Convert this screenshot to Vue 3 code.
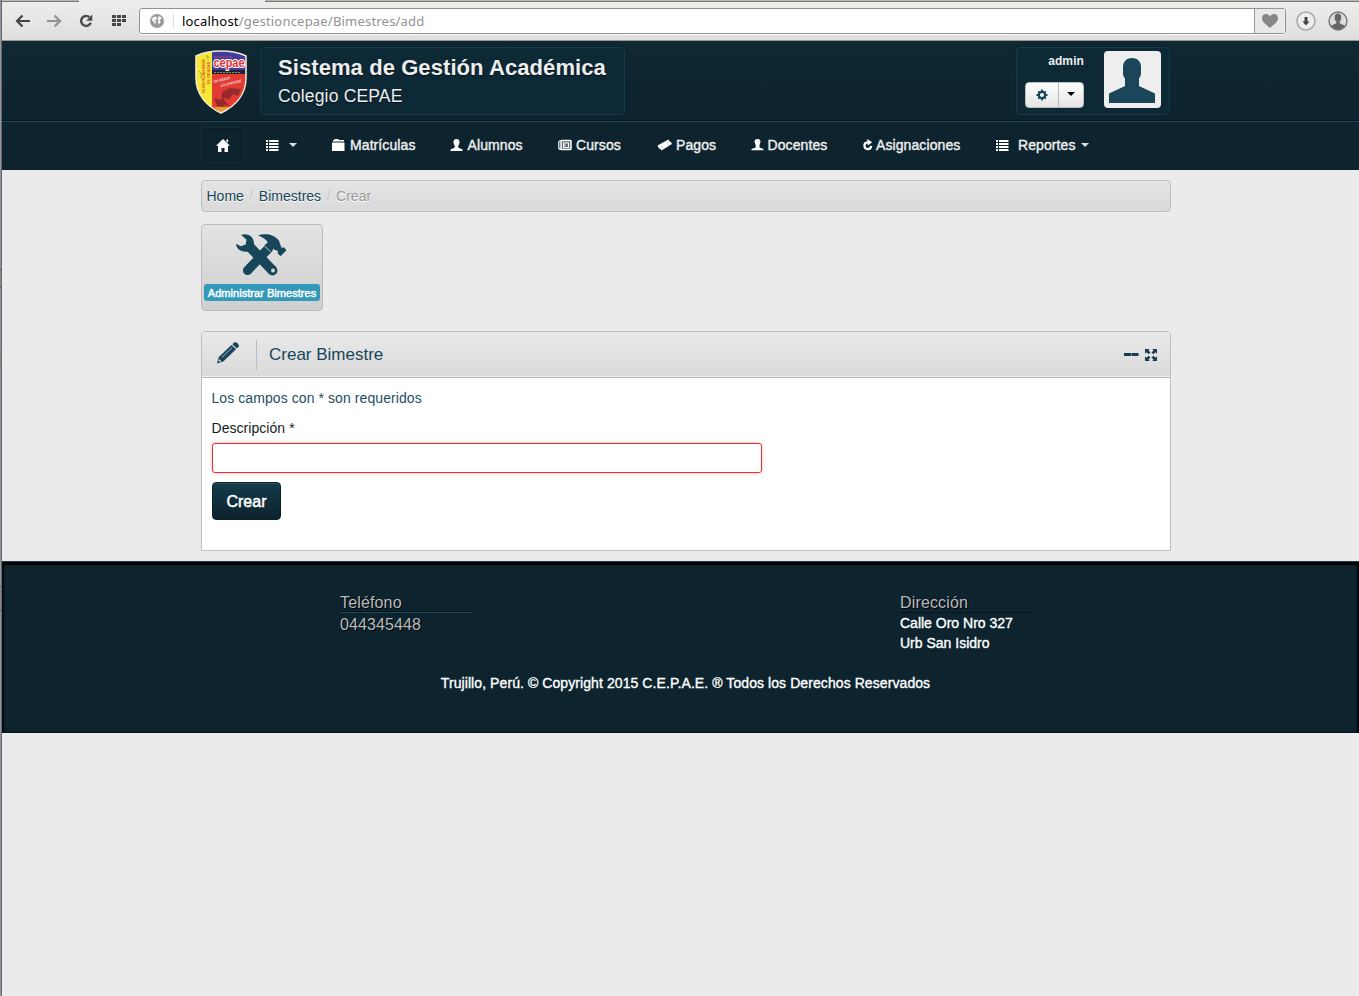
<script setup>
const items = [
  { icon: 'folder', label: 'Matrículas' },
  { icon: 'user', label: 'Alumnos' },
  { icon: 'news', label: 'Cursos' },
  { icon: 'ticket', label: 'Pagos' },
  { icon: 'teacher', label: 'Docentes' },
  { icon: 'refresh', label: 'Asignaciones' },
  { icon: 'list', label: 'Reportes', caret: true },
]
</script>

<template>
  <div class="window">
    <div class="edge"><i class="notch first"></i><i class="notch second"></i><i class="notch third"></i></div>
    <div class="browser">
      <div class="toolbar">
        <div class="tabline"><i class="tab-left"></i><i class="tab-right"></i></div>
        <div class="tools">
          <svg class="back" width="16" height="14" viewBox="0 0 16 14"><path d="M7.500 1.500L2 7l5.500 5.500M2 7h13" fill="none" stroke="#444" stroke-width="2.200" /></svg>
          <svg class="forward" width="16" height="14" viewBox="0 0 16 14"><path d="M8.500 1.500L14 7l-5.500 5.500M14 7H1" fill="none" stroke="#929292" stroke-width="2.200" /></svg>
          <svg class="reload" width="14" height="14" viewBox="0 0 14 14"><path d="M10.500 3.200A5 5 0 1 0 11.800 8.800" fill="none" stroke="#4b4b4b" stroke-width="2.400" /><path d="M13.300 .5v6.300H7.200z" fill="#4b4b4b" /></svg>
          <svg class="dial" width="15" height="12" viewBox="0 0 15 12"><path d="M0 0h4v3H0zM5 0h4v3H5zM10 0h4v3h-4zM0 4h4v3H0zM5 4h4v3H5zM10 4h4v3h-4zM0 8h4v3H0zM5 8h4v3H5z" fill="#444" /></svg>
          <div class="address">
            <svg class="globe" width="14" height="14" viewBox="0 0 14 14"><circle cx="7" cy="7" r="7" fill="#999" /><path d="M2.500 3.500l3.500-1 1.300 1.500-1 1.800-1.300.5 1 1.500-.8 2.500L3.600 8 2 6.500zM8.500 2l2.500 1 1 2.500-1.500-.6-1 1.500 1.200 1.200-1.500 3-1.400-2 .5-2.200-.5-1.700z" fill="#f5f5f5" /></svg>
            <i class="addr-sep"></i>
            <span class="url"><b>localhost</b>/gestioncepae/Bimestres/add</span>
            <div class="heart"><svg width="16" height="14" viewBox="0 0 16 14"><path d="M8 14C5.500 11 0 8.800 0 4.200 0 1.500 1.800 0 4 0c1.800 0 3.200 1 4 2.500C8.800 1 10.200 0 12 0c2.200 0 4 1.500 4 4.200C16 8.800 10.500 11 8 14z" fill="#868686" /></svg></div>
          </div>
          <svg class="download" width="20" height="20" viewBox="0 0 20 20"><circle cx="10" cy="10" r="9" fill="#eee" stroke="#aaa" stroke-width="1.600" /><path d="M8.500 6h3v4.500h2L10 14.500 6.500 10.500h2z" fill="#444" /></svg>
          <svg class="profile" width="20" height="20" viewBox="0 0 20 20"><circle cx="10" cy="10" r="9" fill="#ddd" stroke="#777" stroke-width="1.400" /><path d="M10 2.500c-2.200 0-3.300 1.500-3.300 3.700 0 2 .6 3.600 1.600 4.500v1.500L3 14.800A8.500 8.500 0 0 0 17 14.800l-5.300-2.600v-1.500c1-.9 1.600-2.500 1.600-4.500 0-2.200-1.100-3.700-3.300-3.700z" fill="#666" /></svg>
        </div>
      </div>

      <header class="header">
        <svg class="logo" width="54" height="66" viewBox="0 0 54 66">
          <defs><clipPath id="shield"><path d="M27 2C35 2 44 3 52 7v22c0 16-10 28-25 35C12 57 2 45 2 29V7c8-4 17-5 25-5z" /></clipPath></defs>
          <g clip-path="url(#shield)">
            <rect width="54" height="66" fill="#e23b34" />
            <rect width="18" height="66" fill="#f6e936" />
            <rect x="18" width="36" height="22" fill="#3e3d9b" />
            <rect x="18" y="21" width="36" height="4" fill="#222338" />
            <path d="M28 43l8-4 11 1-3 7-5-2-4 5-6-1 6 8-8-2zM20 49l7 2 4 7-8-1zM35 41l5 1-3 3z" fill="#7c242b" opacity=".75" />
            <path d="M20 58h16l-9 6z" fill="#e4a02c" />
            <path d="M20 23.500h27" stroke="#d5c644" stroke-width=".7" stroke-dasharray="2 1" />
            <path d="M20 8h19" stroke="#c9435c" stroke-width="1" stroke-dasharray="3 .7" />
          </g>
          <path d="M27 2C35 2 44 3 52 7v22c0 16-10 28-25 35C12 57 2 45 2 29V7c8-4 17-5 25-5z" fill="none" stroke="#f4e4d7" stroke-width="1.600" />
          <text x="19.500" y="18" class="brand" textLength="31" lengthAdjust="spacingAndGlyphs">cepae</text>
          <text x="20" y="34" font-size="4.500" font-style="italic" fill="#fff" transform="rotate(-14 20 34)" textLength="17" lengthAdjust="spacingAndGlyphs">Del esfuerzo</text>
          <text x="27" y="38" font-size="4.500" font-style="italic" fill="#fff" transform="rotate(-14 27 38)" textLength="21" lengthAdjust="spacingAndGlyphs">a la universidad</text>
          <text x="11" y="44" font-size="4" font-weight="bold" fill="#db3b35" transform="rotate(-90 11 44)" textLength="34" lengthAdjust="spacingAndGlyphs">COLEGIO PREUNIVERSITARIO</text>
          <text x="16" y="35" font-size="4" font-weight="bold" fill="#db3b35" transform="rotate(-90 16 35)" textLength="22" lengthAdjust="spacingAndGlyphs">DE CIENCIAS</text>
          <path d="M5 22l3 4-2 3m8-18v-4h-2" fill="none" stroke="#77783c" stroke-width=".7" />
        </svg>
        <div class="title-box"><h1>Sistema de Gestión Académica</h1><h2>Colegio CEPAE</h2></div>
        <div class="user-box">
          <div class="user-left">
            <span class="username">admin</span>
            <div class="btn-group">
              <span class="gear"><svg width="12" height="12" viewBox="0 0 12 12"><circle cx="6" cy="6" r="3.200" fill="none" stroke="#17485b" stroke-width="2.200" /><path d="M6 .5v2M6 9.500v2M.5 6h2M9.500 6h2M2.300 2.300l1.200 1.200M8.500 8.500l1.200 1.200M2.300 9.700l1.200-1.200M8.500 3.500l1.200-1.200" stroke="#17485b" stroke-width="1.900" /></svg></span>
              <span class="drop"><i class="caret dark"></i></span>
            </div>
          </div>
          <div class="avatar"><svg width="46" height="46" viewBox="0 0 46 46"><path d="M23 1c6 0 9 4 9 9v6c0 3-1.200 4.500-2 5.500V29l16 7.500V46H0v-9.500L16 29v-7.500c-.8-1-2-2.500-2-5.500v-6c0-5 3-9 9-9z" fill="#1b465a" /></svg></div>
        </div>
      </header>

      <nav class="nav">
        <a class="home"><svg width="14" height="14" viewBox="0 0 14 14"><path d="M7 1l7 6.700h-2V14H8.500v-4h-3v4H2V7.700H0zM10.300 1.500h1.800v3.300l-1.800-1.600z" fill="#fff" /></svg></a>
        <a class="menu"><svg width="13" height="12" viewBox="0 0 13 12"><path d="M0 1h2v2H0zM3 1h9.500v2H3zM0 4h2v2H0zM3 4h9.500v2H3zM0 7h2v2H0zM3 7h9.500v2H3zM0 10h2v2H0zM3 10h9.500v2H3z" fill="#fff" /></svg><i class="caret"></i></a>
        <a v-for="item in items" :key="item.label" :class="item.icon">
          <span class="nav-icon">
            <svg v-if="item.icon === 'folder'" width="13" height="12" viewBox="0 0 13 12"><path d="M1 2.500V1h1.500V0h4v1H12v1.500zM0 3.500h12.500V12H0z" fill="#fff" /></svg>
            <svg v-else-if="item.icon === 'user'" width="13" height="12" viewBox="0 0 13 12"><path d="M6.500 0C8.700 0 9.700 1.500 9.500 3.500 9.400 5.200 8.700 6 8.200 6.700V8.500l4.300 2V12H.5v-1.500l4.300-2V6.700C4.300 6 3.600 5.200 3.500 3.500 3.300 1.500 4.300 0 6.500 0z" fill="#fff" /></svg>
            <svg v-else-if="item.icon === 'news'" width="14" height="12" viewBox="0 0 14 12"><rect x="3" y="1.500" width="10" height="9" rx=".7" fill="#fff" fill-opacity=".3" stroke="#fff" stroke-width="1.500" /><path d="M3 2H1.500L.8 3v6.500l1 .8H4M5.500 8.500V4h5v4.500zM5 6.200h2.500" fill="none" stroke="#fff" stroke-width="1.200" /></svg>
            <svg v-else-if="item.icon === 'ticket'" width="16" height="12" viewBox="0 0 16 12"><path d="M.5 6.500L11.500 .5l1 2 1.400.3 1 2.200L4.500 11.500l-1.200-1.800-1.300-.3z" fill="#fff" /><path d="M4.500 6.600l1.500 2.600M10.500 3.300l1.400 2.300" stroke="#52636b" stroke-width=".8" stroke-dasharray="1 1" /></svg>
            <svg v-else-if="item.icon === 'teacher'" width="13" height="12" viewBox="0 0 13 12"><path d="M6.500 0C9 0 9.700 1.400 9.400 3.200L8.500 6v2.500l4 1.500v1.300H.5V10L4.700 8.500V6L3.600 3.200C3.300 1.400 4 0 6.500 0z" fill="#fff" /></svg>
            <svg v-else-if="item.icon === 'refresh'" width="10" height="12" viewBox="0 0 10 12"><path d="M4.800 3.300H4.500A3.400 3.400 0 1 0 8.200 6.900" fill="none" stroke="#fff" stroke-width="2.200" /><path d="M4.200 0L9.200 3.300 4.700 6.500z" fill="#fff" /></svg>
            <svg v-else width="13" height="12" viewBox="0 0 13 12"><path d="M0 1h2v2H0zM3 1h9.500v2H3zM0 4h2v2H0zM3 4h9.500v2H3zM0 7h2v2H0zM3 7h9.500v2H3zM0 10h2v2H0zM3 10h9.500v2H3z" fill="#fff" /></svg>
          </span>
          <span>{{ item.label }}</span><i v-if="item.caret" class="caret"></i>
        </a>
      </nav>

      <main class="main">
        <div class="breadcrumb"><a>Home</a><i>/</i><a>Bimestres</a><i>/</i><span>Crear</span></div>
        <div class="shortcut">
          <svg width="50" height="42" viewBox="0 0 50 42">
            <path d="M12 11L36.500 36.500" stroke="#17465a" stroke-width="9.800" />
            <path d="M5 .8C12-1.500 18.500 2.500 18 10.500L12 17.500C6 18.500 .5 15.500 0 9.700l4.800 2.600 4.900-1.800.8-4.800z" fill="#17465a" />
            <circle cx="36.500" cy="36.500" r="4.900" fill="#17465a" /><circle cx="37" cy="36.500" r="1.900" fill="#d8d8d8" />
            <path d="M32.500 14.500L11.500 36.500" stroke="#17465a" stroke-width="9.200" stroke-linecap="round" />
            <path d="M22 1.200C29-1 38 0 42.500 6c1.500 2 1.300 5 3.300 8l2.200-.8 2.500 3-6 6-2.900-3 .4-2.300c-3.500-.3-4.600-1.800-6.200-3.300l-3 2.500-4.500-4.500 3.500-3.400C30 5 26 3.300 22 1.200z" fill="#17465a" />
            <path d="M28.500 12.200l6 5.300" stroke="#d8d8d8" stroke-width=".9" />
          </svg>
          <span>Administrar Bimestres</span>
        </div>
        <section class="panel">
          <div class="panel-head">
            <div class="pencil"><svg width="22" height="22" viewBox="0 0 22 22"><path d="M0 21.500L1.800 15 14.500 3l4.500 4.200L6.300 19.500z" fill="#17465a" /><path d="M15.300 2.200L17 .5c2-1 5.500 1.500 4.800 4L19.800 6.400z" fill="#17465a" /><path d="M4.700 15.500L15.300 5.500" stroke="#aab8c0" stroke-width="1" /><path d="M1.800 17.800l2 1.900" stroke="#d8dde0" stroke-width="1.400" /></svg></div>
            <h3>Crear Bimestre</h3>
            <div class="controls">
              <svg width="15" height="4" viewBox="0 0 15 4"><path d="M0 0h7v3H0zM7.500 0h7v3h-7z" fill="#163d4e" /></svg>
              <svg width="12" height="12" viewBox="0 0 12 12"><path d="M0 0h4.700L3.500 1.400l2 2-1.900 1.900-2.100-2L0 4.700zM12 0H7.300l1.200 1.400-2 2 1.900 1.900 2.100-2L12 4.700zM0 12h4.700l-1.200-1.400 2-2-1.900-1.900-2.100 2L0 7.300zM12 12H7.300l1.200-1.400-2-2 1.900-1.900 2.100 2L12 7.300z" fill="#163d4e" /></svg>
            </div>
          </div>
          <div class="panel-body">
            <p class="hint">Los campos con * son requeridos</p>
            <label for="description">Descripción *</label>
            <input id="description" type="text" />
            <button type="button">Crear</button>
          </div>
        </section>
      </main>

      <footer class="footer">
        <div class="contact">
          <div class="phone"><h4>Teléfono</h4><p>044345448</p></div>
          <div class="place"><h4>Dirección</h4><p>Calle Oro Nro 327<br />Urb San Isidro</p></div>
        </div>
        <p class="copyright">Trujillo, Perú. © Copyright 2015 C.E.P.A.E. ® Todos los Derechos Reservados</p>
      </footer>
    </div>
  </div>
</template>

<style>
body { overflow: hidden; background: #ebebeb; }
</style>
<style scoped>
* { box-sizing: border-box; }
h1, h2, h3, h4, p { margin: 0; font-weight: normal; }
svg { display: block; flex: none; }
.window { width: 1359px; height: 996px; display: flex; background: #ebebeb; font: 14px/20px "Liberation Sans", Arial, sans-serif; color: #111d25; }
.edge { width: 2px; background: #8f949c; border-right: 1px solid #686a70; display: flex; flex-direction: column; flex: none; }
.notch { height: 19px; background: #888; border: solid #555; border-width: 1px 0; }
.first { margin-top: 269px; }
.second { margin-top: 62px; border: 0; }
.third { margin-top: 217px; height: 25px; }
.browser { width: 1357px; flex: none; }
.toolbar { height: 41px; background: linear-gradient(#eeeeec, #dededc); border-bottom: 1px solid #989894; }
.tabline { height: 2px; display: flex; justify-content: space-between; }
.tabline i { height: 2px; background: #bbbcb6; border-bottom: 1px solid #777; }
.tab-left { width: 77px; }
.tab-right { width: 1094px; }
.tools { display: flex; align-items: center; height: 38px; padding-left: 13px; }
.forward { margin-left: 15px; }
.reload { margin-left: 17px; }
.dial { margin-left: 19px; }
.address { margin-left: 12px; width: 1147px; height: 26px; background: #fff; border: 1px solid #939393; border-radius: 3px; display: flex; align-items: center; box-shadow: 0 1px #f8f8f8; }
.globe { margin-left: 10px; }
.addr-sep { width: 1px; height: 14px; background: #ddd; margin-left: 9px; }
.url { margin-left: 8px; font: 13px/20px "Noto Sans", sans-serif; letter-spacing: .2px; color: #929292; white-space: nowrap; }
.url b { font-weight: normal; color: #000; }
.heart { width: 31px; height: 24px; margin-left: auto; border-left: 1px solid #999; background: #e9e9e8; display: flex; align-items: center; justify-content: center; }
.download { margin-left: 10px; }
.profile { margin-left: 12px; }
.header { height: 81px; background: linear-gradient(#0f2832, #0d232d); border-bottom: 1px solid #1c485b; display: flex; padding: 6px 189px 0 192px; box-shadow: inset 0 -1px #08171e; }
.logo { margin-top: 2px; overflow: visible; }
.logo text { font-family: "Liberation Sans", sans-serif; }
.logo .brand { font-size: 12px; font-weight: bold; fill: #e13033; stroke: #fff; stroke-width: 2px; paint-order: stroke; }
.title-box { margin-left: 12px; width: 365px; height: 68px; padding: 8px 17px; background: #0d2936; border: 1px solid #153c4c; border-radius: 4px; box-shadow: 0 0 1px #041016; color: #eee; text-shadow: 0 1px 1px #061117; }
.title-box h1 { font-size: 22px; line-height: 23px; font-weight: bold; letter-spacing: .08px; white-space: nowrap; }
.title-box h2 { font-size: 17.5px; line-height: 20px; margin-top: 7px; letter-spacing: .18px; }
.user-box { width: 154px; height: 68px; margin-left: auto; background: #0d2936; border: 1px solid #153c4c; border-radius: 4px; display: flex; padding: 3px 8px 0 8px; justify-content: space-between; box-shadow: 0 0 1px #041016; }
.user-left { width: 59px; text-align: right; }
.username { display: block; margin-top: 1px; color: #eee; font-size: 12px; line-height: 18px; font-weight: bold; letter-spacing: .1px; }
.btn-group { display: flex; width: 59px; height: 26px; margin-top: 12px; border-radius: 4px; background: linear-gradient(#fff, #e4e4e4); border: 1px solid #bdbdbd; }
.gear, .drop { display: flex; align-items: center; justify-content: center; }
.gear { width: 33px; }
.drop { width: 25px; border-left: 1px solid #bbb; }
.drop .caret { margin-top: -2px; }
.avatar { width: 57px; height: 57px; border-radius: 4px; background: #eee; padding: 6px 0 0 5px; }
.caret { width: 0; height: 0; border: solid transparent; border-width: 4px 4px 0; border-top-color: #ddd; }
.caret.dark { border-top-color: #000; }
.nav { height: 48px; background: #0d242f; display: grid; grid-template-columns: 64px 67px 118px 108px 99px 94px 112px 133px 120px; padding: 5px 0 0 199px; color: #eee; letter-spacing: .09px; -webkit-text-stroke: .4px #eee; }
.nav a { display: flex; height: 36px; align-items: center; white-space: nowrap; }
.nav .home { width: 44px; justify-content: center; border: 1px solid #0f2f3d; border-radius: 4px; background: #0d232e; box-shadow: inset 0 2px 3px #09202a; }
.menu { padding-left: 1px; }
.menu .caret { margin-left: 10px; }
.nav-icon { width: 18px; flex: none; }
.user .nav-icon { width: 17.5px; }
.ticket .nav-icon { width: 19px; }
.teacher .nav-icon { width: 16.5px; }
.refresh .nav-icon { width: 13px; }
.list .nav-icon { width: 22px; }
.list .caret { margin-left: 5px; }
.main { width: 970px; margin-left: 199px; padding-top: 10px; height: 391px; }
.breadcrumb { height: 32px; padding: 5px 4.5px; border: 1px solid #bebebe; border-radius: 4px; background: linear-gradient(#e4e4e4, #dadada); color: #999; text-shadow: 0 1px #fff; display: flex; }
.breadcrumb a { color: #17465a; }
.breadcrumb i { width: 15px; text-align: center; color: #c2c2c2; font-style: normal; }
.shortcut { margin-top: 12px; width: 122px; height: 87px; border: 1px solid #bbb; border-radius: 4px; background: linear-gradient(#e3e3e3, #cfcfcf); padding: 9px 2px 0; }
.shortcut svg { margin-left: 32px; overflow: visible; }
.shortcut span { display: block; height: 17px; margin-top: 8px; text-align: center; background: #3299bb; border-radius: 3px; color: #fff; font-size: 11px; line-height: 18px; letter-spacing: .04px; white-space: nowrap; -webkit-text-stroke: .45px #fff; }
.panel { margin-top: 20px; height: 220px; border: 1px solid #bebebe; border-radius: 4px 4px 0 0; background: #fff; }
.panel-head { height: 46px; display: flex; align-items: center; border-bottom: 1px solid #bbb; background: linear-gradient(#e9e9e9, #dadada); border-radius: 3px 3px 0 0; box-shadow: inset 0 -1px #eee; padding: 0 13px 0 15px; color: #17465a; }
.pencil { width: 40px; height: 30px; padding-top: 2px; border-right: 1px solid #b9bdc5; }
.panel-head h3 { font-size: 17px; margin-left: 12px; }
.controls { margin-left: auto; display: flex; align-items: center; gap: 6px; }
.panel-body { padding: 10px; }
.hint { color: #234f64; letter-spacing: .08px; margin-left: -.5px; }
label { display: block; margin: 10px 0 0 -.5px; letter-spacing: .05px; }
input { display: block; width: 550px; height: 30px; margin: 5px 0 9px; border: 1px solid #ee2e2e; border-radius: 3px; background: #fff; box-shadow: 0 0 4px #f4c1c1; outline: 0; }
button { display: block; width: 69px; height: 38px; border: 1px solid #0b222c; border-radius: 4px; padding: 2px 0 0; background: linear-gradient(#143b4b, #0c222c); box-shadow: inset 0 1px #31505e; color: #fff; font: 16px "Liberation Sans", sans-serif; -webkit-text-stroke: .5px #fff; }
.footer { height: 172px; background: #0d242f; border-top: 1px solid #15384a; box-shadow: inset 0 3px 1px #000, inset 2px 0 2px #020a10, inset -2px 0 2px #020a10; color: #fff; }
.contact { display: flex; height: 111px; padding: 31px 0 0 338px; }
.phone { width: 560px; }
.footer h4 { width: 132px; height: 20px; border-bottom: 1px solid #06161e; font-size: 16px; letter-spacing: .15px; color: #bbb; text-shadow: 1px 1px #000; }
.footer .phone h4 { height: 19px; margin-bottom: 1px; box-shadow: 0 1px #1b485c; }
.phone p { font-size: 16px; line-height: 23px; letter-spacing: .1px; color: #bbb; text-shadow: 1px 1px #000; }
.place p, .copyright { -webkit-text-stroke: .35px #fff; }
.copyright { text-align: center; margin-left: 10px; letter-spacing: .08px; }
</style>
